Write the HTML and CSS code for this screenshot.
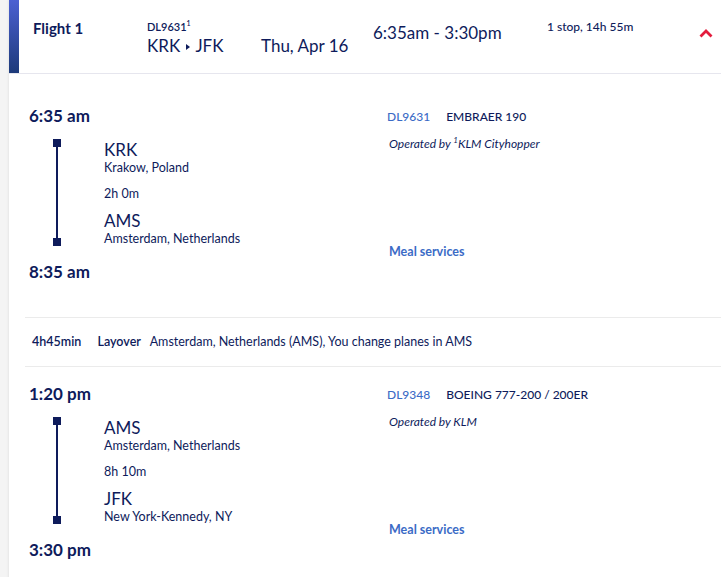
FILE: index.html
```html
<!DOCTYPE html>
<html>
<head>
<link rel="stylesheet" href="styles.css">
</head>
<body>

<div class="card">
    <div class="header">
        <div class="bar"></div>
        <div class="title">Flight 1</div>
        <div class="route">
            <div class="code">DL9631<sup>1</sup></div>
            <div class="big">KRK <span class="arrow"></span> JFK</div>
        </div>
        <div class="date big">Thu, Apr 16</div>
        <div class="times big">6:35am - 3:30pm</div>
        <div class="stops">1 stop, 14h 55m</div>
        <div class="toggle">
            <svg width="14" height="10" viewBox="0 0 14 10">
                <path d="M1.5 8.5 L7 3 L12.5 8.5" fill="none" stroke="#e31c3d" stroke-width="2.8"/>
            </svg>
        </div>
    </div>

    <div class="details">
        <div class="segment">
            <div class="left">
                <div class="time">6:35 am</div>
                <div class="line">
                    <span class="dot"></span>
                    <span class="stem"></span>
                    <span class="dot"></span>
                </div>
                <div class="time arr">8:35 am</div>
            </div>
            <div class="airports">
                <div class="ap">KRK</div>
                <div class="city">Krakow, Poland</div>
                <div class="dur">2h 0m</div>
                <div class="ap">AMS</div>
                <div class="city">Amsterdam, Netherlands</div>
            </div>
            <div class="info">
                <div class="flight"><span class="num">DL9631</span><span class="plane">EMBRAER 190</span></div>
                <div class="operated">Operated by <sup>1</sup>KLM Cityhopper</div>
                <div class="meal">Meal services</div>
            </div>
        </div>

        <div class="layover">
            <span class="lay-time">4h45min</span>
            <span class="lay-label">Layover</span>
            <span>Amsterdam, Netherlands (AMS), You change planes in AMS</span>
        </div>

        <div class="segment second">
            <div class="left">
                <div class="time">1:20 pm</div>
                <div class="line">
                    <span class="dot"></span>
                    <span class="stem"></span>
                    <span class="dot"></span>
                </div>
                <div class="time arr">3:30 pm</div>
            </div>
            <div class="airports">
                <div class="ap">AMS</div>
                <div class="city">Amsterdam, Netherlands</div>
                <div class="dur">8h 10m</div>
                <div class="ap">JFK</div>
                <div class="city">New York-Kennedy, NY</div>
            </div>
            <div class="info">
                <div class="flight"><span class="num">DL9348</span><span class="plane">BOEING 777-200 / 200ER</span></div>
                <div class="operated">Operated by KLM</div>
                <div class="meal">Meal services</div>
            </div>
        </div>
    </div>
</div>

</body>
</html>
```

FILE: styles.css
```css
body {
    font-family: Lato, "Open Sans", sans-serif;
    margin: 0;
    padding: 0 0 0 9px;
    background-color: #f4f4f4;
    color: #0e1b5b;
    height: 577px;
    overflow: hidden;
}

.card {
    background-color: white;
    min-height: 577px;
    box-shadow: -1px 0 2px rgba(0, 0, 0, 0.06);
}

/* header row */

.header {
    display: flex;
    height: 73px;
    border-bottom: 1px solid #e6e6ee;
}

.bar {
    width: 10px;
    background: linear-gradient(#4c61d2, #1d3a7a);
}

.title {
    width: 114px;
    padding: 18px 0 0 14px;
    font-size: 15px;
    font-weight: 700;
    line-height: 20px;
}

.route {
    width: 114px;
    padding-top: 20px;
}

.code {
    font-size: 11px;
    font-weight: 600;
    line-height: 14px;
}

.code sup {
    font-size: 7px;
    vertical-align: 5px;
    line-height: 0;
}

.big {
    font-size: 17px;
    line-height: 22px;
}

.route .big {
    margin-top: 1px;
}

.arrow {
    display: inline-block;
    width: 0;
    height: 0;
    border-top: 3px solid transparent;
    border-bottom: 3px solid transparent;
    border-left: 4px solid #0e1b5b;
    margin: 0 2px 2px 1px;
}

.date {
    width: 112px;
    padding-top: 35px;
}

.times {
    width: 174px;
    padding-top: 22px;
}

.stops {
    flex: 1;
    padding-top: 19px;
    font-size: 12px;
    font-weight: 500;
    line-height: 16px;
}

.toggle {
    width: 22px;
    padding-top: 28px;
}

.toggle svg {
    display: block;
}

/* flight details */

.details {
    padding-left: 16px;
}

.segment {
    display: flex;
    padding: 32px 0 35px 4px;
}

.segment.second {
    padding-top: 17px;
    padding-bottom: 19px;
}

.left {
    width: 75px;
}

.time {
    font-size: 17px;
    font-weight: 700;
    line-height: 20px;
}

.line {
    display: flex;
    flex-direction: column;
    align-items: center;
    width: 8px;
    margin: 13px 0 0 24px;
}

.dot {
    width: 8px;
    height: 8px;
    background-color: #0e1b5b;
}

.stem {
    width: 1.5px;
    height: 91px;
    background-color: #0e1b5b;
}

.time.arr {
    margin-top: 16px;
}

.airports {
    width: 283px;
    padding-top: 34px;
}

.ap {
    font-size: 17px;
    line-height: 20px;
}

.city,
.dur {
    font-size: 12.5px;
    line-height: 16px;
}

.dur {
    margin: 10px 0 9px;
}

.info {
    padding-top: 3px;
    font-size: 12px;
    line-height: 16px;
}

.num {
    color: #3b6bc6;
    font-weight: 500;
    margin-right: 16px;
}

.plane {
    font-weight: 500;
}

.operated {
    font-style: italic;
    margin: 11px 0 0 2px;
}

.operated sup {
    font-size: 8px;
    vertical-align: 5px;
    line-height: 0;
}

.meal {
    margin: 92px 0 0 2px;
    color: #3b6bc6;
    font-size: 12.5px;
    font-weight: 700;
}

.layover {
    border-top: 1px solid #ebebeb;
    border-bottom: 1px solid #ebebeb;
    padding: 16px 0 16px 7px;
    font-size: 12.5px;
    line-height: 16px;
}

.lay-time,
.lay-label {
    font-weight: 600;
    margin-right: 13px;
}

.lay-label {
    margin-right: 6px;
}
```
